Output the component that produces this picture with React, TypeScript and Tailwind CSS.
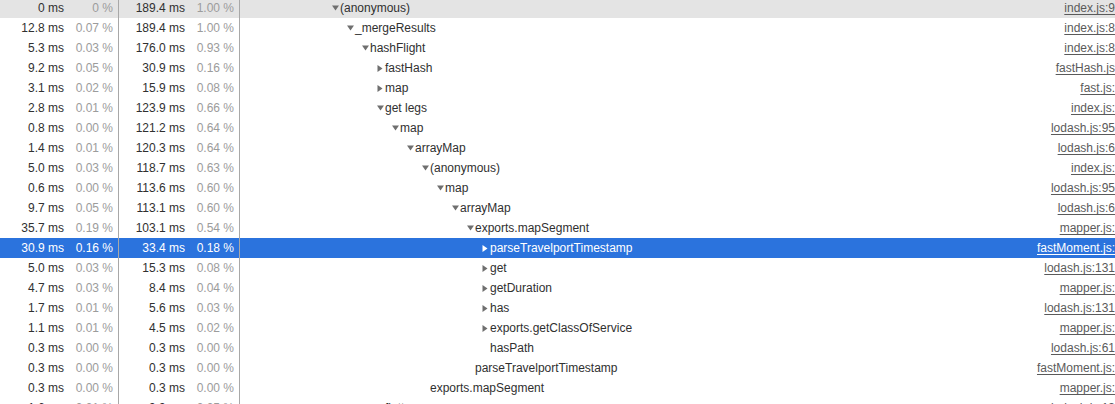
import React from 'react';

type Row = {
  self: string;
  selfPct: string;
  total: string;
  totalPct: string;
  depth: number;
  name: string;
  arrow: 'down' | 'right' | null;
  url: string;
};

const rows: Row[] = [
  { self: '0 ms', selfPct: '0 %', total: '189.4 ms', totalPct: '1.00 %', depth: 0, name: '(anonymous)', arrow: 'down', url: 'index.js:9' },
  { self: '12.8 ms', selfPct: '0.07 %', total: '189.4 ms', totalPct: '1.00 %', depth: 1, name: '_mergeResults', arrow: 'down', url: 'index.js:8' },
  { self: '5.3 ms', selfPct: '0.03 %', total: '176.0 ms', totalPct: '0.93 %', depth: 2, name: 'hashFlight', arrow: 'down', url: 'index.js:8' },
  { self: '9.2 ms', selfPct: '0.05 %', total: '30.9 ms', totalPct: '0.16 %', depth: 3, name: 'fastHash', arrow: 'right', url: 'fastHash.js' },
  { self: '3.1 ms', selfPct: '0.02 %', total: '15.9 ms', totalPct: '0.08 %', depth: 3, name: 'map', arrow: 'right', url: 'fast.js:' },
  { self: '2.8 ms', selfPct: '0.01 %', total: '123.9 ms', totalPct: '0.66 %', depth: 3, name: 'get legs', arrow: 'down', url: 'index.js:' },
  { self: '0.8 ms', selfPct: '0.00 %', total: '121.2 ms', totalPct: '0.64 %', depth: 4, name: 'map', arrow: 'down', url: 'lodash.js:95' },
  { self: '1.4 ms', selfPct: '0.01 %', total: '120.3 ms', totalPct: '0.64 %', depth: 5, name: 'arrayMap', arrow: 'down', url: 'lodash.js:6' },
  { self: '5.0 ms', selfPct: '0.03 %', total: '118.7 ms', totalPct: '0.63 %', depth: 6, name: '(anonymous)', arrow: 'down', url: 'index.js:' },
  { self: '0.6 ms', selfPct: '0.00 %', total: '113.6 ms', totalPct: '0.60 %', depth: 7, name: 'map', arrow: 'down', url: 'lodash.js:95' },
  { self: '9.7 ms', selfPct: '0.05 %', total: '113.1 ms', totalPct: '0.60 %', depth: 8, name: 'arrayMap', arrow: 'down', url: 'lodash.js:6' },
  { self: '35.7 ms', selfPct: '0.19 %', total: '103.1 ms', totalPct: '0.54 %', depth: 9, name: 'exports.mapSegment', arrow: 'down', url: 'mapper.js:' },
  { self: '30.9 ms', selfPct: '0.16 %', total: '33.4 ms', totalPct: '0.18 %', depth: 10, name: 'parseTravelportTimestamp', arrow: 'right', url: 'fastMoment.js:' },
  { self: '5.0 ms', selfPct: '0.03 %', total: '15.3 ms', totalPct: '0.08 %', depth: 10, name: 'get', arrow: 'right', url: 'lodash.js:131' },
  { self: '4.7 ms', selfPct: '0.03 %', total: '8.4 ms', totalPct: '0.04 %', depth: 10, name: 'getDuration', arrow: 'right', url: 'mapper.js:' },
  { self: '1.7 ms', selfPct: '0.01 %', total: '5.6 ms', totalPct: '0.03 %', depth: 10, name: 'has', arrow: 'right', url: 'lodash.js:131' },
  { self: '1.1 ms', selfPct: '0.01 %', total: '4.5 ms', totalPct: '0.02 %', depth: 10, name: 'exports.getClassOfService', arrow: 'right', url: 'mapper.js:' },
  { self: '0.3 ms', selfPct: '0.00 %', total: '0.3 ms', totalPct: '0.00 %', depth: 10, name: 'hasPath', arrow: null, url: 'lodash.js:61' },
  { self: '0.3 ms', selfPct: '0.00 %', total: '0.3 ms', totalPct: '0.00 %', depth: 9, name: 'parseTravelportTimestamp', arrow: null, url: 'fastMoment.js:' },
  { self: '0.3 ms', selfPct: '0.00 %', total: '0.3 ms', totalPct: '0.00 %', depth: 6, name: 'exports.mapSegment', arrow: null, url: 'mapper.js:' },
  { self: '1.6 ms', selfPct: '0.01 %', total: '9.9 ms', totalPct: '0.05 %', depth: 3, name: 'flatten', arrow: null, url: 'lodash.js:13' },
];

const HOVER_ROW = 0;
const SELECTED_ROW = 12;

const Arrow: React.FC<{ dir: 'down' | 'right'; selected: boolean }> = ({ dir, selected }) => {
  const fill = selected ? '#ffffff' : '#6f6f6f';
  if (dir === 'down') {
    return (
      <svg width="7" height="6" viewBox="0 0 7 6" className="block">
        <polygon points="0,0.5 7,0.5 3.5,5.5" fill={fill} />
      </svg>
    );
  }
  return (
    <svg width="6" height="7" viewBox="0 0 6 7" className="block">
      <polygon points="0.5,0 5.5,3.5 0.5,7" fill={fill} />
    </svg>
  );
};

const TimeCell: React.FC<{ ms: string; pct: string; selected: boolean; width: string }> = ({ ms, pct, selected, width }) => (
  <div className={`${width} h-full flex items-center justify-end pr-[5px] border-r border-[#a8a8a8] shrink-0`}>
    <span className={`text-right ${selected ? 'text-white' : 'text-[#303030]'}`}>{ms}</span>
    <span className={`w-[49px] text-right ${selected ? 'text-white' : 'text-[#9c9c9c]'}`}>{pct}</span>
  </div>
);

export default function App() {
  return (
    <div
      className="w-[1115px] h-[404px] overflow-hidden bg-white text-[12px] leading-[20px]"
      style={{ fontFamily: '"Liberation Sans", Arial, sans-serif' }}
    >
      <div className="-mt-[2px]">
        {rows.map((row, i) => {
          const selected = i === SELECTED_ROW;
          const bg = selected ? 'bg-[#2b73dd]' : i === HOVER_ROW ? 'bg-[#e4e4e4]' : 'bg-white';
          return (
            <div key={i} className={`flex h-[20px] items-center whitespace-nowrap ${bg}`}>
              <TimeCell ms={row.self} pct={row.selfPct} selected={selected} width="w-[119px]" />
              <TimeCell ms={row.total} pct={row.totalPct} selected={selected} width="w-[121px]" />
              <div className="flex-1 min-w-0 h-full flex items-center overflow-hidden">
                <div className="flex items-center flex-1 min-w-0" style={{ paddingLeft: 92 + row.depth * 15 }}>
                  <span className="w-[8px] flex items-center shrink-0">
                    {row.arrow && <Arrow dir={row.arrow} selected={selected} />}
                  </span>
                  <span className={selected ? 'text-white' : 'text-[#303030]'}>{row.name}</span>
                </div>
                <span className={`underline underline-offset-2 shrink-0 ${selected ? 'text-white' : 'text-[#5a5a5a]'}`}>
                  {row.url}
                </span>
              </div>
            </div>
          );
        })}
      </div>
    </div>
  );
}
